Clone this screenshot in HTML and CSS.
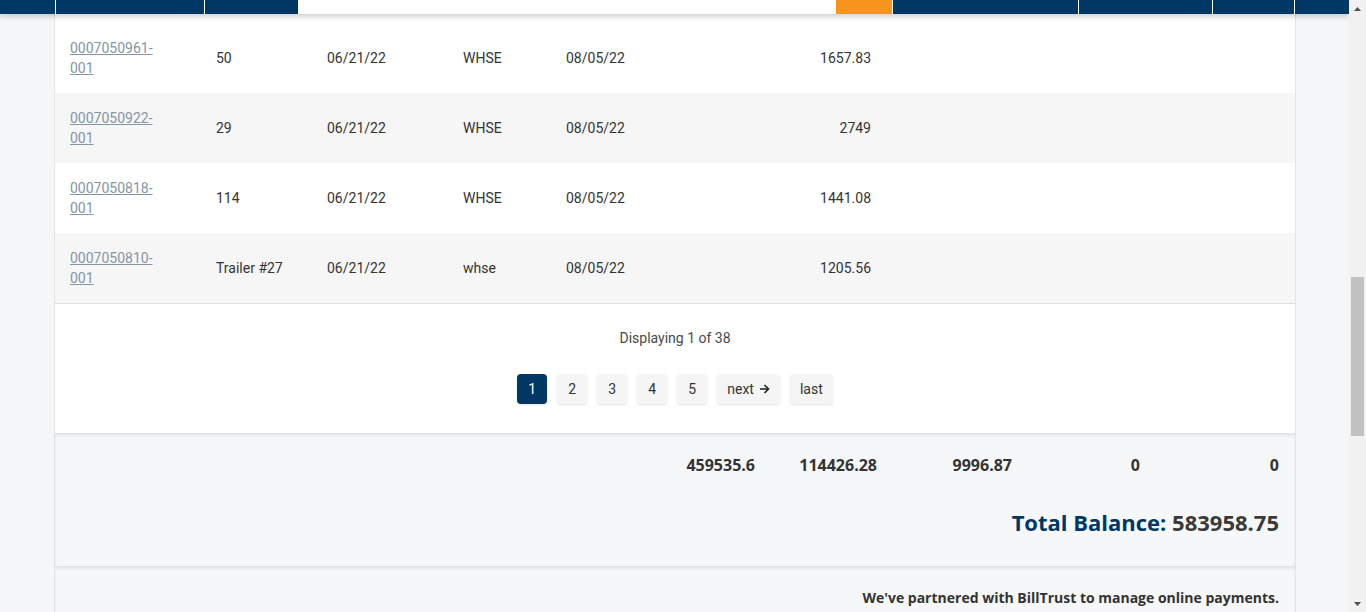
FILE: index.html
```html
<!DOCTYPE html>
<html lang="en">
<head>
<meta charset="utf-8">
<title>Invoices</title>
<link rel="stylesheet" href="styles.css">
</head>
<body>
<div class="page">
  <main class="main">
    <div class="head-bar">
      <span class="hb navy w55"></span>
      <span class="hb navy w148"></span>
      <span class="hb navy w93"></span>
      <span class="hb white w536"></span>
      <span class="hb orange w56"></span>
      <span class="hb navy w185"></span>
      <span class="hb navy w133"></span>
      <span class="hb navy w81"></span>
      <span class="hb navy grow"></span>
    </div>
    <div class="card">
      <div class="rows">
        <div class="row">
          <div class="c c1"><a href="#" class="inv">0007050961-001</a></div>
          <div class="c c2">50</div>
          <div class="c c3">06/21/22</div>
          <div class="c c4">WHSE</div>
          <div class="c c5">08/05/22</div>
          <div class="c c6">1657.83</div>
          <div class="c c7"></div>
        </div>
        <div class="row alt">
          <div class="c c1"><a href="#" class="inv">0007050922-001</a></div>
          <div class="c c2">29</div>
          <div class="c c3">06/21/22</div>
          <div class="c c4">WHSE</div>
          <div class="c c5">08/05/22</div>
          <div class="c c6">2749</div>
          <div class="c c7"></div>
        </div>
        <div class="row">
          <div class="c c1"><a href="#" class="inv">0007050818-001</a></div>
          <div class="c c2">114</div>
          <div class="c c3">06/21/22</div>
          <div class="c c4">WHSE</div>
          <div class="c c5">08/05/22</div>
          <div class="c c6">1441.08</div>
          <div class="c c7"></div>
        </div>
        <div class="row alt last">
          <div class="c c1"><a href="#" class="inv">0007050810-001</a></div>
          <div class="c c2">Trailer #27</div>
          <div class="c c3">06/21/22</div>
          <div class="c c4">whse</div>
          <div class="c c5">08/05/22</div>
          <div class="c c6">1205.56</div>
          <div class="c c7"></div>
        </div>
      </div>
      <div class="pager">
        <div class="display-info">Displaying 1 of 38</div>
        <div class="pages">
          <a href="#" class="pg active">1</a>
          <a href="#" class="pg">2</a>
          <a href="#" class="pg">3</a>
          <a href="#" class="pg">4</a>
          <a href="#" class="pg">5</a>
          <a href="#" class="pg wide">next <svg class="arrow" width="11" height="10" viewBox="0 0 11 10"><path d="M1 5h8.5M5.5 1l4 4-4 4" fill="none" stroke="#222" stroke-width="1.6"/></svg></a>
          <a href="#" class="pg wide">last</a>
        </div>
      </div>
      <section class="totals">
        <div class="totals-row">
          <span></span>
          <span class="tv">459535.6</span>
          <span class="tv">114426.28</span>
          <span class="tv">9996.87</span>
          <span class="tv">0</span>
          <span class="tv">0</span>
        </div>
        <div class="balance"><span class="bl">Total Balance:</span> 583958.75</div>
      </section>
      <section class="partner">
        <p class="partner-text">We've partnered with BillTrust to manage online payments.</p>
      </section>
    </div>
  </main>
  <div class="scrollbar">
    <div class="sb-btn"><svg width="7" height="4" viewBox="0 0 7 4"><path d="M0 4L3.5 0 7 4z" fill="#505050"/></svg></div>
    <div class="sb-pre"></div>
    <div class="sb-thumb"></div>
    <div class="sb-post"></div>
    <div class="sb-btn"><svg width="7" height="4" viewBox="0 0 7 4"><path d="M0 0L3.5 4 7 0z" fill="#505050"/></svg></div>
  </div>
</div>
</body>
</html>
```

FILE: styles.css
```css
html, body {
  margin: 0;
  padding: 0;
  height: 100%;
  overflow: hidden;
}
body {
  background: #f5f6f8;
  font-family: Roboto, "Liberation Sans", Arial, sans-serif;
  font-size: 14px;
  color: #333;
}
.page {
  display: flex;
  height: 612px;
}
.main {
  flex: 1;
  display: flex;
  flex-direction: column;
  overflow: hidden;
}
.head-bar {
  display: flex;
  gap: 1px;
  height: 14px;
  flex: none;
  background: #fff;
  position: relative;
  z-index: 2;
  box-shadow: 0 2px 6px rgba(0, 0, 0, 0.22);
}
.hb { display: block; height: 14px; }
.navy { background: #003764; }
.white { background: #fff; }
.orange { background: #f7941d; }
.w55 { width: 55px; }
.w148 { width: 148px; }
.w93 { width: 93px; }
.w536 { width: 536px; }
.w56 { width: 56px; }
.w185 { width: 185px; }
.w133 { width: 133px; }
.w81 { width: 81px; }
.grow { flex: 1; }

.card {
  margin-left: 55px;
  width: 1240px;
  background: #fff;
  box-shadow: -1px 0 0 #e3e4e6, 1px 0 0 #e3e4e6;
  padding-top: 9px;
  flex: none;
}
.rows { display: flex; flex-direction: column; }
.row {
  display: grid;
  grid-template-columns: 146px 111px 136px 103px 150px 185px 1fr;
  height: 70px;
  align-items: center;
  background: #fff;
}
.row.alt { background: #f6f6f6; }
.row.last { border-bottom: 1px solid #dedede; }
.c { padding-left: 15px; line-height: 20px; }
.c6 { text-align: right; padding-left: 0; padding-right: 15px; }
.inv {
  color: #8495a6;
  text-decoration: underline;
  display: inline-block;
  width: 90px;
}

.pager {
  display: flex;
  flex-direction: column;
  align-items: center;
  padding-top: 24px;
  height: 105px;
}
.display-info {
  color: #4a4a4a;
  line-height: 20px;
}
.pages {
  display: flex;
  gap: 10px;
  margin-top: 26px;
}
.pg {
  display: flex;
  align-items: center;
  justify-content: center;
  gap: 5px;
  min-width: 30px;
  height: 30px;
  box-sizing: border-box;
  border-radius: 4px;
  background: #f5f5f5;
  color: #333;
  text-decoration: none;
  box-shadow: 0 1px 2px rgba(0, 0, 0, 0.12);
}
.pg.active { background: #003764; color: #fff; }
.pg.wide { padding: 0 10px; }
.arrow { display: block; }

.totals {
  background: #f6f7f9;
  border-top: 1px solid #e2e3e5;
  box-shadow: inset 0 2px 3px rgba(0, 0, 0, 0.07);
  padding: 20px 16px 0 0;
  height: 112px;
  font-family: "Open Sans", "Liberation Sans", sans-serif;
  font-weight: 700;
  color: #333;
}
.totals-row {
  display: grid;
  grid-template-columns: 1fr 122px 122px 135px 128px 139px;
  font-size: 16px;
  line-height: 22px;
}
.tv { text-align: right; }
.balance {
  text-align: right;
  font-size: 22px;
  line-height: 30px;
  margin-top: 31px;
  color: #3a3a3a;
}
.bl { color: #003764; }

.partner {
  background: #f6f7f9;
  border-top: 1px solid #e2e3e5;
  box-shadow: inset 0 2px 3px rgba(0, 0, 0, 0.07);
  padding: 21px 16px 0 0;
  height: 60px;
}
.partner-text {
  margin: 0;
  text-align: right;
  font-family: "Open Sans", "Liberation Sans", sans-serif;
  font-weight: 700;
  font-size: 14px;
  line-height: 20px;
  color: #333;
}

.scrollbar {
  width: 17px;
  flex: none;
  background: #f1f1f1;
  display: flex;
  flex-direction: column;
  align-items: center;
}
.sb-btn {
  width: 17px;
  height: 17px;
  display: flex;
  align-items: center;
  justify-content: center;
  flex: none;
}
.sb-pre { height: 260px; flex: none; }
.sb-thumb { width: 13px; height: 159px; background: #c1c1c1; flex: none; }
.sb-post { flex: 1; }
```
